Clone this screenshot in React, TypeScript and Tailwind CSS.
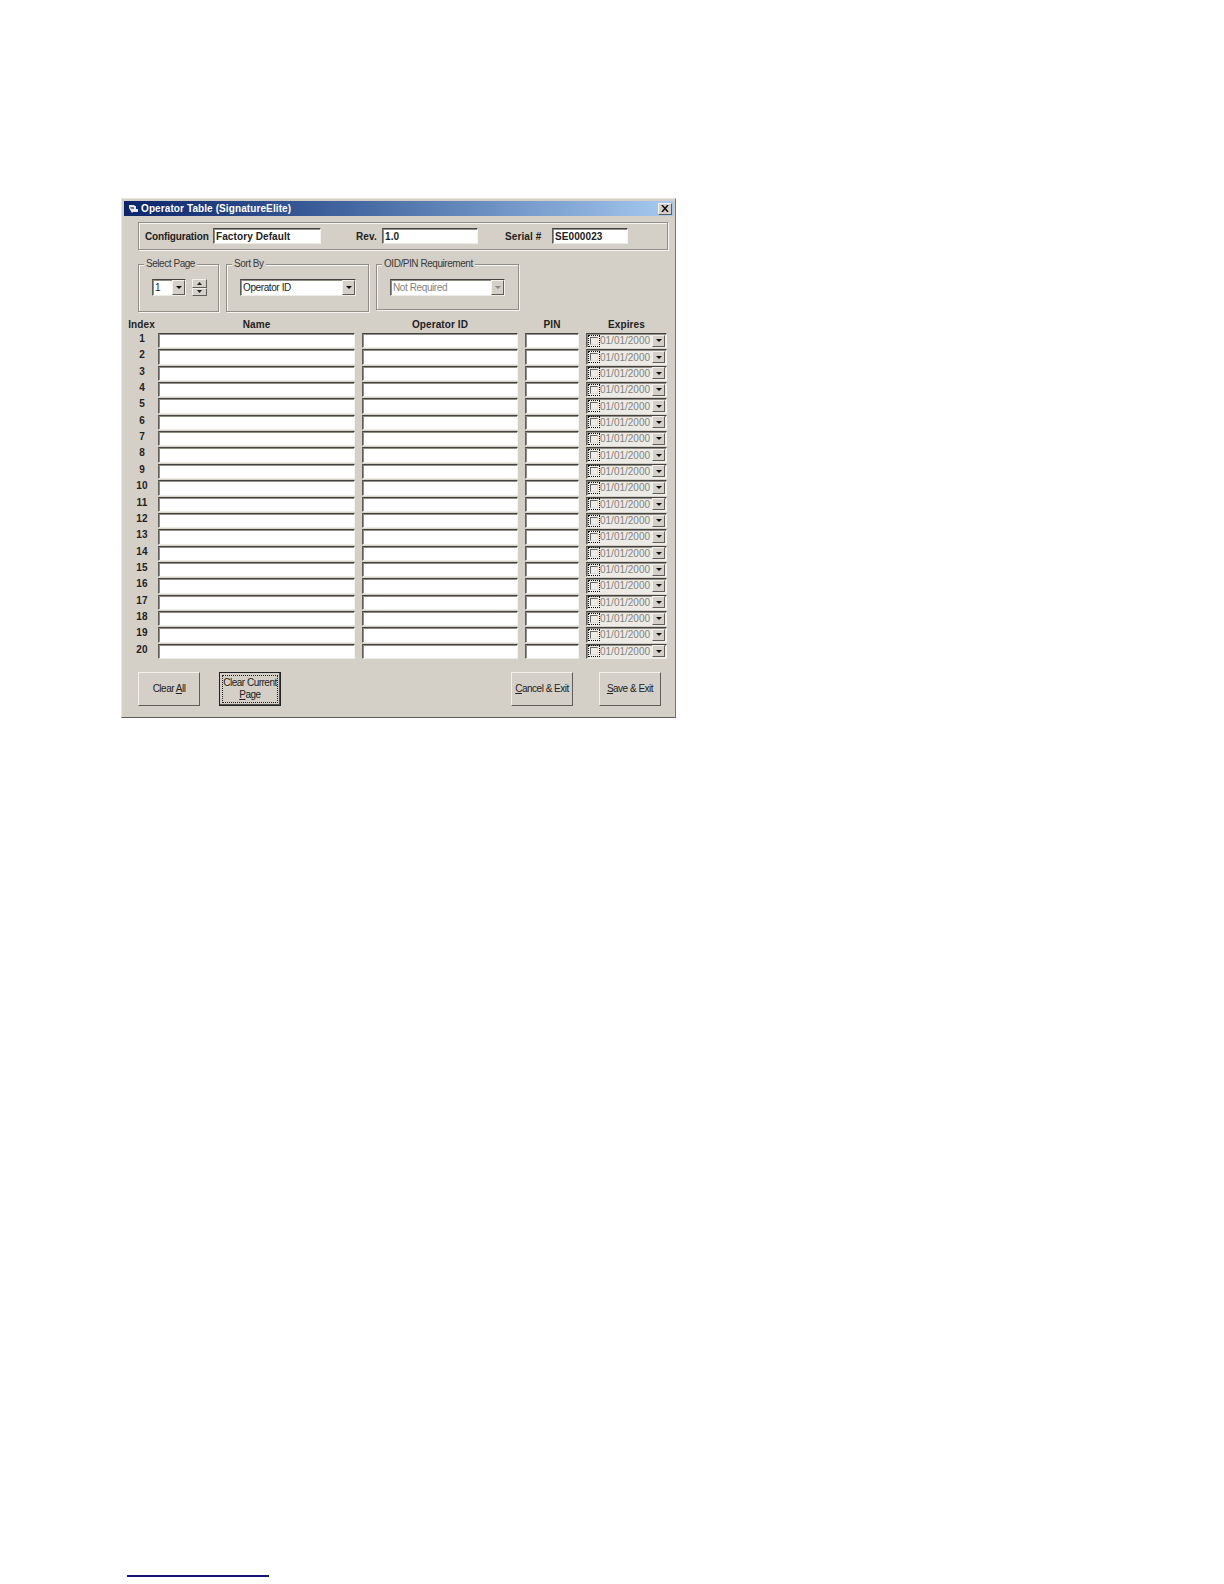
import type { ReactNode } from "react";

const rows = Array.from({ length: 20 }, (_, i) => i + 1);

const edge = "border border-t-[#45433f] border-l-[#5f5d58] border-r-[#f4f3ef] border-b-[#ecebe6] shadow-[inset_1px_1px_0_#8f8d86]";
const sunken = `${edge} bg-white`;
const etched = "border border-[#918e87] shadow-[inset_1px_1px_0_#f6f5f1,1px_1px_0_#f6f5f1]";
const raised = "border border-t-[#f2f1ec] border-l-[#f2f1ec] border-r-[#5f5d58] border-b-[#5f5d58]";

const DropButton = ({ muted }: { muted?: boolean }) => (
  <span className={`flex h-full w-[13px] shrink-0 items-center justify-center bg-[#d4d0c8] ${raised}`}>
    <svg width="6" height="3" viewBox="0 0 6 3">
      <path d="M0 0h6L3 3z" fill={muted ? "#8a8881" : "#111"} />
    </svg>
  </span>
);

const Group = ({ label, className, children }: { label: string; className: string; children: ReactNode }) => (
  <div className={`relative shrink-0 ${etched} ${className}`}>
    <span className="absolute -top-[7px] left-[5px] bg-[#d4d0c8] px-[2px] text-[10px] leading-[12px] tracking-[-0.45px] whitespace-nowrap text-[#3a3a3a]">{label}</span>
    {children}
  </div>
);

const Combo = ({ value, className, muted }: { value: string; className: string; muted?: boolean }) => (
  <div className={`flex h-[17px] items-center ${sunken} ${className}`}>
    <span className={`flex-1 truncate pl-[2px] text-[10px] tracking-[-0.4px] ${muted ? "text-[#85837d]" : "text-[#222]"}`}>{value}</span>
    <DropButton muted={muted} />
  </div>
);

const Button = ({ children, focused, className }: { children: ReactNode; focused?: boolean; className?: string }) => (
  <div
    className={`flex h-[34px] w-[62px] shrink-0 flex-col items-center justify-center text-center text-[10px] leading-[12px] tracking-[-0.5px] whitespace-nowrap text-[#222] ${
      focused ? "border border-[#222] p-[2px] shadow-[inset_-1px_-1px_0_#55534e]" : raised
    } ${className ?? ""}`}
  >
    {focused ? (
      <span className="flex h-full w-full flex-col items-center justify-center border border-dotted border-[#222]">{children}</span>
    ) : (
      children
    )}
  </div>
);

const Field = ({ value, className }: { value: string; className: string }) => (
  <div className={`flex h-[16px] shrink-0 items-center pl-[2px] text-[10px] font-bold tracking-[0.1px] text-[#222] ${sunken} ${className}`}>{value}</div>
);

const Header = ({ children, className }: { children: ReactNode; className: string }) => (
  <div className={`text-center text-[10px] leading-[12px] font-bold tracking-[0.1px] whitespace-nowrap text-[#222] ${className}`}>{children}</div>
);

const Caption = ({ children, className }: { children: ReactNode; className: string }) => (
  <span className={`shrink-0 text-[10px] font-bold whitespace-nowrap text-[#222] ${className}`}>{children}</span>
);

export default function App() {
  return (
    <div className="min-h-[1584px] bg-white pt-[198px] pl-[121px] font-['Liberation_Sans',Arial,sans-serif]">
      <div className="h-[520px] w-[555px] border border-t-[#e8e6e0] border-l-[#e8e6e0] border-r-[#77756f] border-b-[#5f5d58] bg-[#d4d0c8] pt-[2px] pr-px pl-[2px]">
        {/* title bar */}
        <div className="flex h-[15px] items-center bg-gradient-to-r from-[#0a246a] to-[#a6caf0] pr-[2px] pl-[4px]">
          <svg width="11" height="10" viewBox="0 0 11 10" className="mr-[2px] shrink-0">
            <path d="M1 1h5l1 1h1v3h2v3H5L4 9 1 4z" fill="#e8e8e8" />
            <path d="M2 3h4v2H3z" fill="#6a7a9a" />
          </svg>
          <span className="flex-1 text-[10px] font-bold tracking-[0.1px] text-white">Operator Table (SignatureElite)</span>
          <span className={`flex h-[12px] w-[14px] items-center justify-center bg-[#d4d0c8] ${raised}`}>
            <svg width="8" height="7" viewBox="0 0 8 7">
              <path d="M1 0l6 7M7 0L1 7" fill="none" stroke="#111" strokeWidth="1.500" />
            </svg>
          </span>
        </div>

        {/* configuration */}
        <div className={`mt-[6px] ml-[14px] flex h-[28px] w-[530px] items-center ${etched}`}>
          <Caption className="ml-[6px] w-[68px] tracking-[-0.15px]">Configuration</Caption>
          <Field value="Factory Default" className="w-[108px]" />
          <Caption className="ml-[35px] w-[26px] tracking-[0.1px]">Rev.</Caption>
          <Field value="1.0" className="w-[96px]" />
          <Caption className="ml-[27px] w-[47px] tracking-[0.1px]">Serial #</Caption>
          <Field value="SE000023" className="w-[76px]" />
        </div>

        {/* groups */}
        <div className="mt-[14px] ml-[14px] flex items-start gap-[7px]">
          <Group label="Select Page" className="h-[48px] w-[81px]">
            <div className="mt-[14px] ml-[13px] flex items-center">
              <Combo value="1" className="w-[34px]" />
              <div className="ml-[6px] flex h-[17px] w-[15px] flex-col">
                <span className={`flex h-1/2 items-center justify-center ${raised}`}>
                  <svg width="5" height="3" viewBox="0 0 5 3"><path d="M0 3h5L2.500 0z" fill="#222" /></svg>
                </span>
                <span className={`flex h-1/2 items-center justify-center ${raised}`}>
                  <svg width="5" height="3" viewBox="0 0 5 3"><path d="M0 0h5L2.500 3z" fill="#222" /></svg>
                </span>
              </div>
            </div>
          </Group>
          <Group label="Sort By" className="h-[48px] w-[143px]">
            <div className="mt-[14px] ml-[13px]">
              <Combo value="Operator ID" className="w-[116px]" />
            </div>
          </Group>
          <Group label="OID/PIN Requirement" className="h-[46px] w-[143px]">
            <div className="mt-[14px] ml-[13px]">
              <Combo value="Not Required" className="w-[115px]" muted />
            </div>
          </Group>
        </div>

        {/* table */}
        <div className="mt-[7px] ml-[4px] flex h-[12px] w-[539px]">
          <Header className="w-[27px]">Index</Header>
          <Header className="ml-[3px] w-[197px]">Name</Header>
          <Header className="ml-[7px] w-[156px]">Operator ID</Header>
          <Header className="ml-[7px] w-[54px]">PIN</Header>
          <Header className="ml-[7px] w-[81px]">Expires</Header>
        </div>
        <div className="mt-[2px] ml-[4px] grid h-[327px] w-[539px] grid-cols-[23px_197px_156px_54px_81px] grid-rows-[repeat(20,minmax(0,1fr))] gap-x-[7px]">
          {rows.map((n) => (
            <div key={n} className="contents">
              <div className="-mt-px pl-[5px] text-center text-[10px] leading-[14px] font-bold tracking-[0.1px] text-[#222]">{n}</div>
              <div className={`mb-px ${sunken}`} />
              <div className={`mb-px ${sunken}`} />
              <div className={`mb-px ${sunken}`} />
              <div className={`mb-px flex items-center bg-[#ecebe6] pr-px pl-px ${edge}`}>
                <span className="h-[12px] w-[12px] shrink-0 border border-dotted border-[#111] p-px">
                  <span className="block h-full w-full border border-t-[#666] border-l-[#666] border-r-[#ddd] border-b-[#ddd]" />
                </span>
                <span className="flex-1 pt-px text-[10px] leading-[12px] whitespace-nowrap text-[#85837d]">01/01/2000</span>
                <span className="h-[12px]"><DropButton /></span>
              </div>
            </div>
          ))}
        </div>

        {/* buttons */}
        <div className="mt-[12px] ml-[14px] flex">
          <Button>
            <span>Clear <u>A</u>ll</span>
          </Button>
          <Button focused className="ml-[19px]">
            <span>Clear Current</span>
            <span><u>P</u>age</span>
          </Button>
          <Button className="ml-[230px]">
            <span><u>C</u>ancel &amp; Exit</span>
          </Button>
          <Button className="ml-[26px]">
            <span><u>S</u>ave &amp; Exit</span>
          </Button>
        </div>
      </div>

      {/* footnote rule */}
      <div className="mt-[857px] ml-[6px] h-[2px] w-[142px] bg-[#14147a]" />
    </div>
  );
}
